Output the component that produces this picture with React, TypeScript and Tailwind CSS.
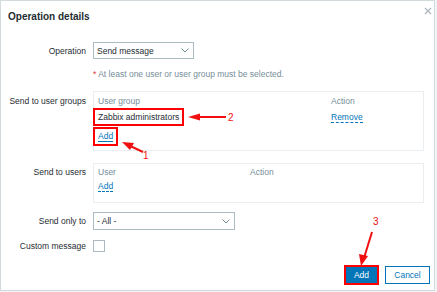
import React from "react";

function Chevron() {
  return (
    <svg width="8" height="5" viewBox="0 0 8 5" className="shrink-0">
      <path d="M0.5 0.5 L4 4 L7.5 0.5" fill="none" stroke="#768d99" strokeWidth="1" />
    </svg>
  );
}

export default function App() {
  return (
    <div className="relative w-[437px] h-[292px] bg-[#f3f4f5] font-['Liberation_Sans',Arial,sans-serif] text-[8.5px] leading-[12px] text-[#1f2c33]">
      <div className="w-[435px] h-[291px] border border-[#d3dade] bg-white flex flex-col">
        {/* title */}
        <div className="h-[31px] flex items-center pl-[7px] text-[10px] font-bold">Operation details</div>

        {/* operation */}
        <div className="mt-[10px] flex items-center gap-[7px]">
          <div className="w-[85px] text-right">Operation</div>
          <div className="w-[101px] h-[17px] border border-[#acbbc2] flex items-center justify-between pl-[3px] pr-[4px]">
            <span>Send message</span>
            <Chevron />
          </div>
        </div>

        {/* note */}
        <div className="mt-[9px] flex gap-[7px]">
          <div className="w-[85px]" />
          <div className="text-[#768d99]">
            <span className="text-[#e33734]">*</span> At least one user or user group must be selected.
          </div>
        </div>

        {/* user groups */}
        <div className="mt-[11px] flex gap-[7px]">
          <div className="w-[85px] text-right pt-[4px]">Send to user groups</div>
          <div className="w-[331px] h-[60px] border border-[#ebeef0] pl-[4px] pt-[3px]">
            <div className="flex text-[#768d99]">
              <div className="w-[233px]">User group</div>
              <div>Action</div>
            </div>
            <div className="flex items-center h-[18px] mt-[1px]">
              <div className="w-[233px]">
                <span className="ml-[-5px] inline-flex items-center h-[18px] border-2 border-[#ff0000] px-[3px]">Zabbix administrators</span>
              </div>
              <div className="text-[#0275b8] border-b border-dashed border-[#0275b8] leading-[10px]">Remove</div>
            </div>
            <div className="flex mt-[1px]">
              <span className="ml-[-5px] inline-flex items-center h-[19px] border-2 border-[#ff0000] px-[3px]">
                <span className="text-[#0275b8] border-b border-[#0275b8] leading-[10px]">Add</span>
              </span>
            </div>
          </div>
        </div>

        {/* users */}
        <div className="mt-[12px] flex gap-[7px]">
          <div className="w-[85px] text-right pt-[3px]">Send to users</div>
          <div className="w-[331px] h-[40px] border border-[#ebeef0] pl-[4px] pt-[2px]">
            <div className="flex text-[#768d99]">
              <div className="w-[152px]">User</div>
              <div>Action</div>
            </div>
            <div className="flex mt-[3px]">
              <span className="text-[#0275b8] border-b border-dashed border-[#0275b8] leading-[10px]">Add</span>
            </div>
          </div>
        </div>

        {/* send only to */}
        <div className="mt-[9px] flex items-center gap-[7px]">
          <div className="w-[85px] text-right">Send only to</div>
          <div className="w-[142px] h-[18px] border border-[#acbbc2] flex items-center justify-between pl-[3px] pr-[4px]">
            <span>- All -</span>
            <Chevron />
          </div>
        </div>

        {/* custom message */}
        <div className="mt-[10px] flex items-center gap-[7px]">
          <div className="w-[85px] text-right">Custom message</div>
          <div className="w-[12px] h-[12px] border border-[#acbbc2]" />
        </div>

        {/* buttons */}
        <div className="mt-[13px] flex justify-end items-center gap-[6px] pr-[4px]">
          <div className="w-[35px] h-[20px] border-2 border-[#ff0000] flex">
            <div className="flex-1 bg-[#0275b8] text-white flex items-center justify-center">Add</div>
          </div>
          <div className="w-[45px] h-[18px] border border-[#0275b8] text-[#0275b8] flex items-center justify-center">Cancel</div>
        </div>
      </div>

      {/* close icon */}
      <svg className="absolute left-[424px] top-[7px]" width="8" height="8" viewBox="0 0 8 8">
        <path d="M1 1 L7 7 M7 1 L1 7" stroke="#acb8be" strokeWidth="1.3" />
      </svg>

      {/* annotations */}
      <svg className="absolute left-0 top-0 pointer-events-none" width="437" height="292" viewBox="0 0 437 292">
        {/* arrow 2 */}
        <line x1="226" y1="117" x2="196" y2="117" stroke="#f01010" strokeWidth="2" />
        <polygon points="188,117 200,113.5 200,120.5" fill="#f01010" />
        {/* arrow 1 */}
        <line x1="143" y1="152" x2="128" y2="145" stroke="#f01010" strokeWidth="2" />
        <polygon points="122,142 134,143 130,150" fill="#f01010" />
        {/* arrow 3 */}
        <line x1="372" y1="232" x2="364" y2="258" stroke="#f01010" strokeWidth="2" />
        <polygon points="361,266 359,254 368,256" fill="#f01010" />
      </svg>
      <div className="absolute left-[228px] top-[112px] text-[10px] leading-[12px] text-[#f01010]">2</div>
      <div className="absolute left-[143px] top-[150px] text-[10px] leading-[12px] text-[#f01010]">1</div>
      <div className="absolute left-[373px] top-[216px] text-[10px] leading-[12px] text-[#f01010]">3</div>
    </div>
  );
}
